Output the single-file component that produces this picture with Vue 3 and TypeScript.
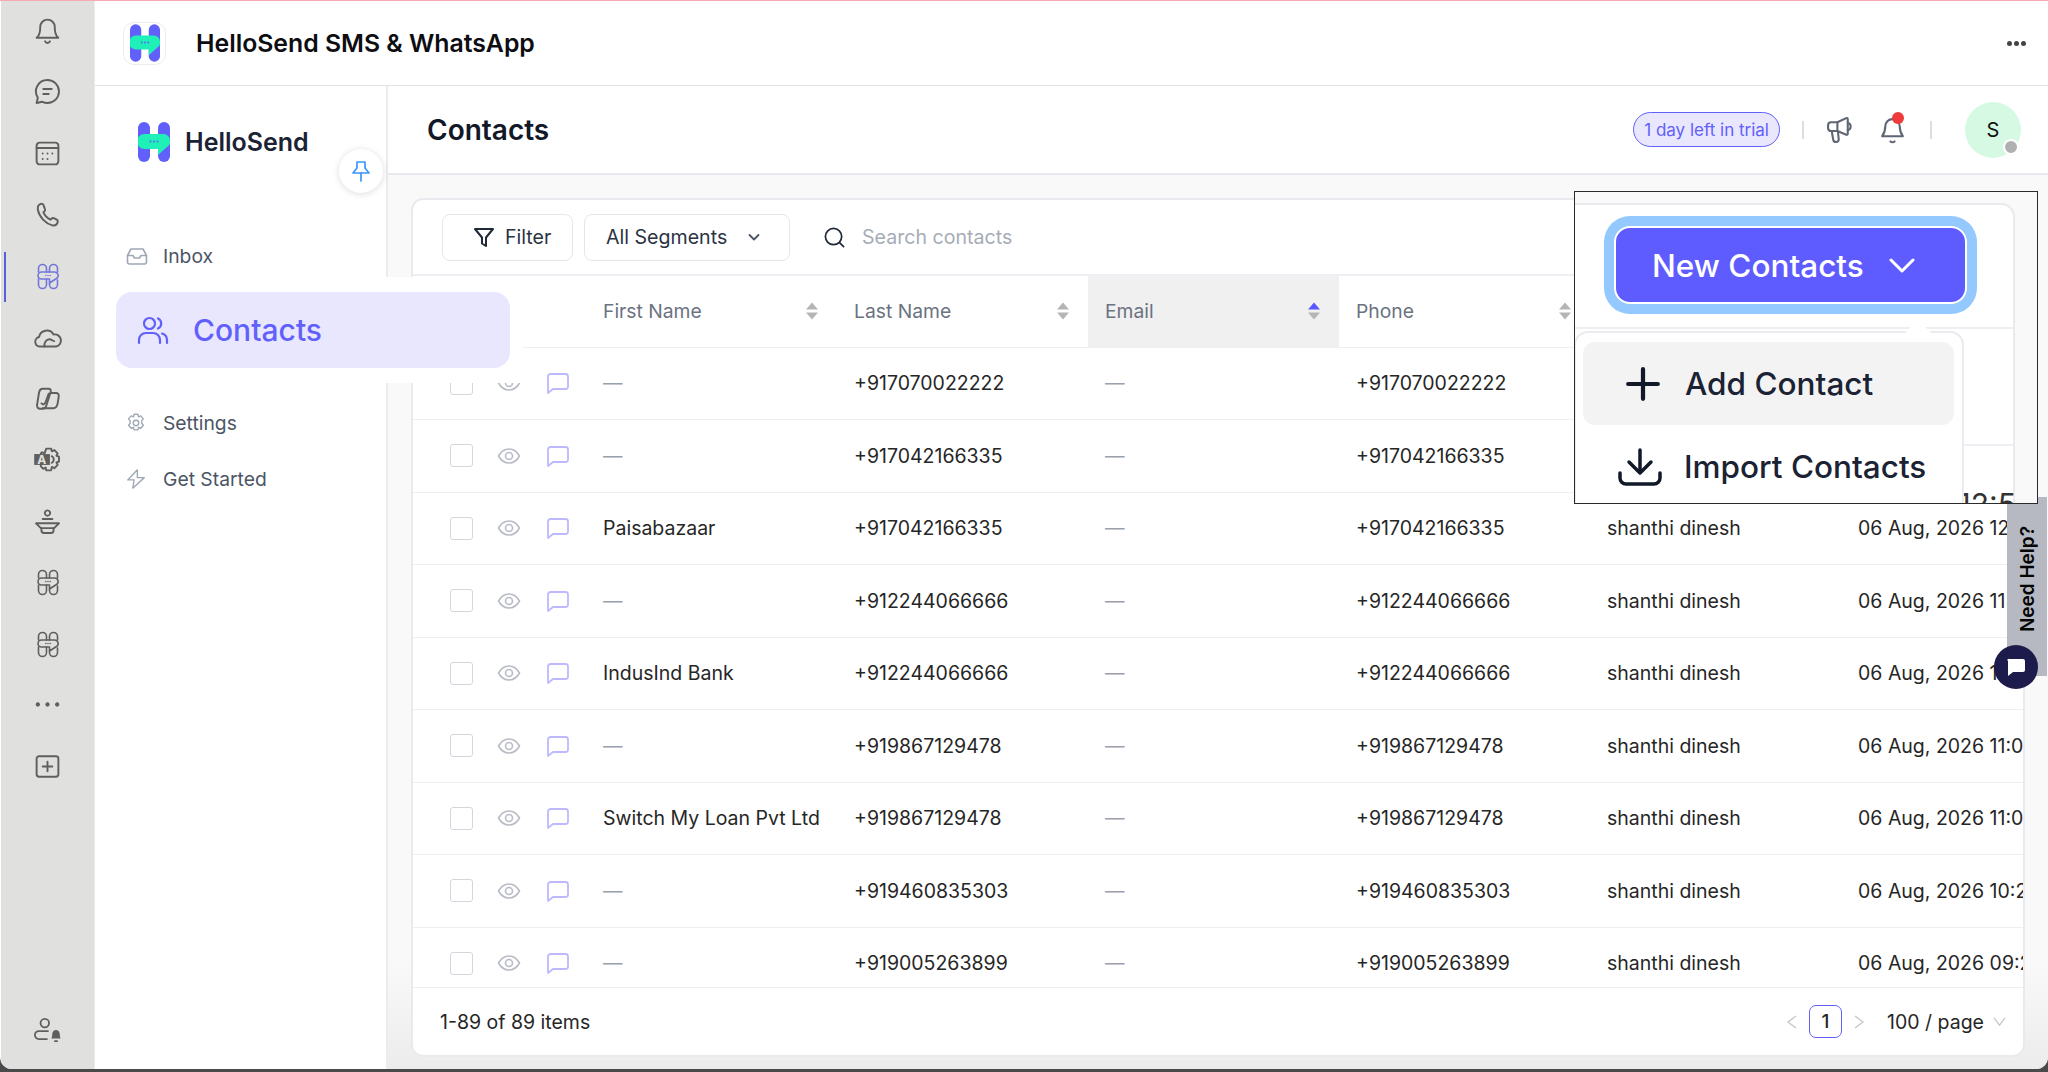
<script setup lang="ts">
type RailIcon = { name: string; vb?: string; w?: number; paths: string[]; fills?: string[]; label?: string; active?: boolean };

const logoOutline = [
  'M2.5 10V6.5a4 4 0 0 1 8 0V10',
  'M13.5 10V6.5a4 4 0 0 1 8 0V10',
  'M5.5 10h13a3.6 3.6 0 0 1 2.4 6.3L13.5 21v-4h-8a3.5 3.5 0 0 1 0-7z',
  'M2.5 17v5.5a4 4 0 0 0 8 0V17',
  'M21.5 18v4.5a4 4 0 0 1-8 0V21',
  'M9.8 13.5h.01M12 13.5h.01M14.2 13.5h.01',
];

const railIcons: RailIcon[] = [
  { name: 'bell', paths: ['M6 9a6 6 0 0 1 12 0c0 5 1 7.500 3 9H3c2-1.500 3-4 3-9z', 'M10 21a2.200 2.200 0 0 0 4 0'] },
  { name: 'chat', paths: ['M12 2.500a9.500 9.500 0 0 1 0 19c-1.500 0-3-.4-4.300-1l-4.700 1 1-4.300A9.500 9.500 0 0 1 12 2.500z', 'M8.500 10h7', 'M8.500 14h4.500'] },
  { name: 'calendar', paths: ['M5.500 3h13A2.500 2.500 0 0 1 21 5.500v13a2.500 2.500 0 0 1-2.500 2.500h-13A2.500 2.500 0 0 1 3 18.500v-13A2.500 2.500 0 0 1 5.500 3z', 'M3 7.500h18', 'M8 12h.01M12 12h.01M16 12h.01M8 16.500h.01M12 16.500h.01'] },
  { name: 'phone', paths: ['M7 3c-2 .5-3.500 2-3 5 1 6 6.500 11.500 12 13 2.500.5 4-1 4.500-3 .2-.8-.2-1.300-.9-1.700l-2.400-1.300c-.7-.3-1.200-.2-1.700.3l-.9 1c-2.600-1-5-3.600-6-6.200l1-.9c.5-.5.6-1 .3-1.700L8.600 4C8.200 3.300 7.700 2.900 7 3z'] },
  { name: 'logo', vb: '0 0 24 28', w: 24, paths: logoOutline, active: true },
  { name: 'cloud', paths: ['M6 19.500a4 4 0 0 1-1-7.900A6.500 6.500 0 0 1 17 9.500a5 5 0 0 1 2 10z', 'M9.500 19.500c-.5-3 1.500-6 4-6 2 0 3 1.500 4 1.500'] },
  { name: 'copilot', paths: ['M8 4h5c1.500 0 2 1 1.600 2.500L11 18c-.4 1.500-1.500 2.500-3 2.500H6c-2 0-3-1.500-2.600-3.500L5 7c.4-2 1.500-3 3-3z', 'M14.500 7.500H19c1.800 0 2.600 1.300 2.300 3l-1 6c-.4 2.400-1.800 3.500-3.500 3.500H8', 'M13 8c-1 3-3 8-3.500 8.500S8 17 7 16'] },
  {
    name: 'translate',
    paths: ['M6.500 7l1-1 2 1L11 3h4l.6 2.200 2.100-1 2.700 2.700-1 2 2.100.7v4.200l-2.100.7 1 2-2.700 2.700-2.100-1L15 21h-4l-.5-2.300-2 1-2-2V16', 'M15.500 9.300a3 3 0 0 1 0 5.400'],
    fills: ['M1 7.500h13v9H1z'],
    label: 'A',
  },
  { name: 'seat', paths: ['M12 2.800a2.200 2.200 0 1 0 .01 0z', 'M8 10h8', 'M2.500 13.500h19l-4 4h-11z', 'M7 17.500v2a2 2 0 0 0 2 2h6a2 2 0 0 0 2-2v-2'] },
  { name: 'logo2', vb: '0 0 24 28', w: 24, paths: logoOutline },
  { name: 'logo3', vb: '0 0 24 28', w: 24, paths: logoOutline },
  { name: 'more', paths: [], fills: ['M4 10.200a1.800 1.800 0 1 0 .01 0z', 'M12 10.200a1.800 1.800 0 1 0 .01 0z', 'M20 10.200a1.800 1.800 0 1 0 .01 0z'] },
  { name: 'plus', paths: ['M5 3.500h14A2 2 0 0 1 21 5.500v13a2 2 0 0 1-2 2H5a2 2 0 0 1-2-2v-13a2 2 0 0 1 2-2z', 'M12 8v8M8 12h8'] },
];

type Row = { first: string; phone: string; time: string };

const rows: Row[] = [
  { first: '—', phone: '+917070022222', time: '01:14 PM' },
  { first: '—', phone: '+917042166335', time: '12:58 PM' },
  { first: 'Paisabazaar', phone: '+917042166335', time: '12:58 PM' },
  { first: '—', phone: '+912244066666', time: '11:32 AM' },
  { first: 'IndusInd Bank', phone: '+912244066666', time: '11:32 AM' },
  { first: '—', phone: '+919867129478', time: '11:07 AM' },
  { first: 'Switch My Loan Pvt Ltd', phone: '+919867129478', time: '11:07 AM' },
  { first: '—', phone: '+919460835303', time: '10:24 AM' },
  { first: '—', phone: '+919005263899', time: '09:26 AM' },
];

const columns = ['First Name', 'Last Name', 'Email', 'Phone', 'Owner', 'Created At'];
</script>

<template>
  <div class="window">
    <aside class="rail">
      <span class="rail-marker"></span>
      <div v-for="icon in railIcons" :key="icon.name" class="rail-item" :class="{ active: icon.active }">
        <svg :viewBox="icon.vb ?? '0 0 24 24'" :width="icon.w ?? 29" :height="icon.vb ? 28 : 29" fill="none" stroke="currentColor" stroke-width="1.600" stroke-linecap="round" stroke-linejoin="round">
          <path v-for="d in icon.fills ?? []" :key="d" :d="d" fill="currentColor" stroke="none" />
          <path v-for="d in icon.paths" :key="d" :d="d" />
          <text v-if="icon.label" x="3.500" y="15.500" font-size="10" font-weight="700" fill="#e0e0de" stroke="none">{{ icon.label }}</text>
        </svg>
      </div>
      <div class="rail-item rail-bottom">
        <svg viewBox="0 0 30 24" width="32" height="26" fill="none" stroke="currentColor" stroke-width="1.700" stroke-linecap="round">
          <circle cx="12" cy="5.500" r="4" />
          <path d="M15 13H6.500a3.200 3.200 0 0 0 0 7.500H14" />
          <path d="M18 20c1-1 .8-3 1-4.500.3-2 1.500-3.500 3.500-3.500s3.200 1.500 3.500 3.500c.2 1.500 0 3.500 1 4.500z" fill="currentColor" stroke="none" />
          <path d="M21.500 22.500h2" />
        </svg>
      </div>
    </aside>

    <div class="shell">
      <header class="app-bar">
        <div class="app-icon">
          <svg viewBox="0 0 32 40" width="30" height="38">
            <rect width="12" height="40" rx="6" fill="#6160fb" />
            <rect x="20" width="12" height="40" rx="6" fill="#6160fb" />
            <path d="M6.500 12h19a6.500 6.500 0 0 1 6.500 6.500v1.500c0 2-1 3.500-2.500 4.500L20 33v-6H6.500a7.500 7.500 0 0 1 0-15z" fill="#1ef0b8" />
            <circle cx="12.500" cy="19.500" r="1" fill="#6160fb" />
            <circle cx="16" cy="19.500" r="1" fill="#6160fb" />
            <circle cx="19.500" cy="19.500" r="1" fill="#6160fb" />
          </svg>
        </div>
        <h1 class="app-title">HelloSend SMS &amp; WhatsApp</h1>
        <div class="app-dots"><i></i><i></i><i></i></div>
      </header>

      <div class="workspace">
        <nav class="nav">
          <div class="brand">
            <svg viewBox="0 0 32 40" width="32" height="40">
              <rect width="12" height="40" rx="6" fill="#6160fb" />
              <rect x="20" width="12" height="40" rx="6" fill="#6160fb" />
              <path d="M6.500 12h19a6.500 6.500 0 0 1 6.500 6.500v1.500c0 2-1 3.500-2.500 4.500L20 33v-6H6.500a7.500 7.500 0 0 1 0-15z" fill="#1ef0b8" />
              <circle cx="12.500" cy="19.500" r="1" fill="#6160fb" />
              <circle cx="16" cy="19.500" r="1" fill="#6160fb" />
              <circle cx="19.500" cy="19.500" r="1" fill="#6160fb" />
            </svg>
            <span>HelloSend</span>
          </div>
          <button class="pin" type="button" aria-label="Pin">
            <svg viewBox="0 0 24 24" width="24" height="24" fill="none" stroke="#3a97fb" stroke-width="1.700" stroke-linejoin="round" stroke-linecap="round">
              <path d="M8 3h8v6l4 5H4l4-5z" />
              <path d="M12 14v8" />
            </svg>
          </button>

          <a class="nav-link inbox">
            <svg viewBox="0 0 24 24" width="24" height="24" fill="none" stroke="#a0a8b4" stroke-width="1.600" stroke-linejoin="round">
              <path d="M6 5h12l3.500 6.500V18a2 2 0 0 1-2 2h-15a2 2 0 0 1-2-2v-6.500z" />
              <path d="M2.500 11.500H8l1.500 2.500h5l1.500-2.500h5.500" />
            </svg>
            Inbox
          </a>
          <div class="nav-active-wrap">
            <a class="nav-active">
              <svg viewBox="0 0 32 32" width="32" height="32" fill="none" stroke="#6160fb" stroke-width="2.200" stroke-linecap="round">
                <circle cx="12.500" cy="9.500" r="5.500" />
                <path d="M2 29v-3c0-4 3-7 7-7h7c4 0 7 3 7 7v3" />
                <path d="M21 4.500a5.500 5.500 0 0 1 0 10" />
                <path d="M25 19.500c3 .8 5 3.500 5 6.500v3" />
              </svg>
              Contacts
            </a>
          </div>
          <a class="nav-link settings">
            <svg viewBox="0 0 24 24" width="22" height="22" fill="none" stroke="#a0a8b4" stroke-width="1.500" stroke-linejoin="round">
              <path d="M10 2.500h4l.7 2.700 2.500-1 2.800 3.300-1.800 2.200.1 2.600 1.700 2.200-2.800 3.300-2.500-1-.7 2.700h-4l-.7-2.700-2.500 1L4 14.500l1.700-2.200-.1-2.600L3.800 7.500 6.800 4.200l2.500 1z" />
              <circle cx="12" cy="12" r="3" />
            </svg>
            Settings
          </a>
          <a class="nav-link started">
            <svg viewBox="0 0 24 24" width="22" height="22" fill="none" stroke="#a0a8b4" stroke-width="1.500" stroke-linejoin="round">
              <path d="M13.500 2 3 13h7l-1.500 9L21 10.500h-7.500z" />
            </svg>
            Get Started
          </a>
        </nav>

        <main class="main">
          <div class="page-head">
            <h2>Contacts</h2>
            <div class="head-tools">
              <span class="trial">1 day left in trial</span>
              <span class="sep"></span>
              <svg class="mega" viewBox="0 0 28 28" width="29" height="29" fill="none" stroke="#5f6673" stroke-width="2" stroke-linejoin="round" stroke-linecap="round">
                <path d="M2 10c0-1.700 1-3 3-3h6l8.500-4c.9-.4 1.500.1 1.500 1v14c0 .9-.6 1.400-1.500 1L11 15.500H5c-2 0-3-1.300-3-3z" />
                <path d="M11 7v8.500" />
                <path d="M5.500 15.500 7 24a2.700 2.700 0 0 0 5.300-.5L11.500 16" />
                <path d="M21 7.500a3.700 3.700 0 0 1 0 7.200" />
              </svg>
              <span class="bell-wrap">
                <svg viewBox="0 0 24 28" width="25" height="29" fill="none" stroke="#5f6673" stroke-width="2" stroke-linejoin="round" stroke-linecap="round">
                  <path d="M5 11a7 7 0 0 1 14 0c0 5 1.500 7.500 3 9.500H2c1.500-2 3-4.500 3-9.500z" />
                  <path d="M10 25.500c1 1 3 1 4 0" />
                </svg>
                <i class="red-dot"></i>
              </span>
              <span class="sep sep-2"></span>
              <span class="avatar">S<i class="status"></i></span>
            </div>
          </div>

          <div class="body">
            <section class="card">
              <div class="toolbar">
                <button class="btn filter" type="button">
                  <svg viewBox="0 0 24 24" width="24" height="24" fill="none" stroke="#1f2937" stroke-width="2" stroke-linejoin="round">
                    <path d="M3 4h18l-7 8.500V21l-4-2.500v-6z" />
                  </svg>
                  Filter
                </button>
                <button class="btn segments" type="button">
                  All Segments
                  <svg viewBox="0 0 14 14" width="14" height="14" fill="none" stroke="#4b5563" stroke-width="1.800" stroke-linecap="round" stroke-linejoin="round">
                    <path d="M2.500 5l4.500 4.500L11.500 5" />
                  </svg>
                </button>
                <div class="search">
                  <svg viewBox="0 0 24 24" width="23" height="23" fill="none" stroke="#1f2937" stroke-width="1.800" stroke-linecap="round">
                    <circle cx="11" cy="11" r="8.500" />
                    <path d="m17.500 17.500 4 4" />
                  </svg>
                  <span>Search contacts</span>
                </div>
              </div>

              <div class="table">
                <div class="grid-row head">
                  <div class="lead"></div>
                  <div v-for="col in columns" :key="col" class="th" :class="{ sorted: col === 'Email' }">
                    {{ col }}
                    <span class="sorter"><i class="up"></i><i class="down"></i></span>
                  </div>
                </div>
                <div v-for="(row, i) in rows" :key="i" class="grid-row">
                  <div class="lead">
                    <span class="check"></span>
                    <svg viewBox="0 0 24 24" width="24" height="24" fill="none" stroke="#b9bcc4" stroke-width="1.600">
                      <path d="M1.500 12C4 7.500 7.500 5 12 5s8 2.500 10.500 7c-2.500 4.500-6 7-10.500 7s-8-2.500-10.500-7z" />
                      <circle cx="12" cy="12" r="3.500" />
                    </svg>
                    <svg class="note" viewBox="0 0 24 24" width="24" height="24" fill="none" stroke="#bdb9ff" stroke-width="1.800" stroke-linejoin="round">
                      <path d="M4.500 3h15A2.500 2.500 0 0 1 22 5.500v10a2.500 2.500 0 0 1-2.500 2.500H7l-5 4V5.500A2.500 2.500 0 0 1 4.500 3z" />
                    </svg>
                  </div>
                  <div class="td" :class="{ dash: row.first === '—' }">{{ row.first }}</div>
                  <div class="td">{{ row.phone }}</div>
                  <div class="td dash">—</div>
                  <div class="td">{{ row.phone }}</div>
                  <div class="td">shanthi dinesh</div>
                  <div class="td">06 Aug, 2026 {{ row.time }}</div>
                </div>
              </div>

              <footer class="pager">
                <span>1-89 of 89 items</span>
                <div class="pager-right">
                  <svg viewBox="0 0 12 16" width="12" height="16" fill="none" stroke="#c4c6cb" stroke-width="1.300"><path d="M10 2 2 8l8 6" /></svg>
                  <span class="page-no">1</span>
                  <svg viewBox="0 0 12 16" width="12" height="16" fill="none" stroke="#c4c6cb" stroke-width="1.300"><path d="m2 2 8 6-8 6" /></svg>
                  <span class="page-size">100 / page</span>
                  <svg viewBox="0 0 16 12" width="15" height="11" fill="none" stroke="#c4c6cb" stroke-width="1.300"><path d="m2 2 6 8 6-8" /></svg>
                </div>
              </footer>
            </section>
          </div>
        </main>
      </div>
    </div>

    <!-- pasted callout over the table -->
    <div class="callout">
      <div class="callout-card">
        <button class="new-btn" type="button">
          New Contacts
          <svg viewBox="0 0 26 16" width="26" height="16" fill="none" stroke="#fff" stroke-width="3" stroke-linecap="round" stroke-linejoin="round">
            <path d="m2 3 11 11L24 3" />
          </svg>
        </button>
        <div class="callout-line"></div>
        <div class="callout-line second"></div>
      </div>
      <span class="callout-time">12:5</span>
      <div class="dropdown">
        <i class="arrow"></i>
        <div class="menu-item hover">
          <svg class="plus" viewBox="0 0 34 34" width="36" height="36" fill="none" stroke="#111827" stroke-width="4" stroke-linecap="round">
            <path d="M17 3v28M3 17h28" />
          </svg>
          Add Contact
        </div>
        <div class="menu-item import">
          <svg viewBox="0 0 44 38" width="44" height="38" fill="none" stroke="#111827" stroke-width="3.500" stroke-linecap="round" stroke-linejoin="round">
            <path d="M22 2v22" />
            <path d="m11 14 11 11 11-11" />
            <path d="M2 25v5a6 6 0 0 0 6 6h28a6 6 0 0 0 6-6v-5" />
          </svg>
          Import Contacts
        </div>
      </div>
    </div>

    <div class="help-tab"><span>Need Help?</span></div>
    <div class="help-bubble">
      <svg viewBox="0 0 24 24" width="24" height="24"><path d="M5 4h14a2 2 0 0 1 2 2v9a2 2 0 0 1-2 2H9l-5 4V6a1 1 0 0 1 1-2z" fill="#fff" /></svg>
    </div>
  </div>
</template>

<style>
html,
body {
  margin: 0;
  background: #4a4a4a;
}
</style>

<style scoped>
* {
  box-sizing: border-box;
}
.window {
  position: relative;
  display: flex;
  width: 2048px;
  height: 1069px;
  overflow: hidden;
  border-top: 1px solid #f6a9b2;
  border-radius: 0 0 12px 12px;
  background: #fff;
  font-family: Inter, "Liberation Sans", sans-serif;
  color: #262626;
}
.rail {
  position: relative;
  display: flex;
  flex-direction: column;
  flex: none;
  width: 94px;
  margin-left: 1px;
  background: #e0e0de;
  border-right: 1px solid #ececec;
  color: #5f5f5f;
}
.rail-marker {
  position: absolute;
  left: 3px;
  top: 251px;
  width: 2px;
  height: 50px;
  background: #5b60d8;
}
.rail-item {
  display: flex;
  flex: none;
  align-items: center;
  justify-content: center;
  height: 61.300px;
}
.rail-marker + .rail-item {
  margin-top: -1px;
}
.rail-item.active {
  color: #7377dc;
}
.rail-bottom {
  margin-top: auto;
  margin-bottom: 8px;
}
.shell {
  display: flex;
  flex: 1;
  flex-direction: column;
  min-width: 0;
}
.app-bar {
  display: flex;
  flex: none;
  align-items: center;
  height: 85px;
  padding: 0 22px 0 28px;
  border-bottom: 1px solid #e2e3e8;
}
.app-icon {
  display: flex;
  align-items: center;
  justify-content: center;
  width: 43px;
  height: 43px;
  border: 1px solid #ececec;
  border-radius: 11px;
}
.app-title {
  margin: 0 0 0 30px;
  font-size: 24.800px;
  font-weight: 600;
  color: #0d0d12;
}
.app-dots {
  display: flex;
  gap: 2px;
  margin-left: auto;
}
.app-dots i {
  width: 5px;
  height: 5px;
  border-radius: 50%;
  background: #444;
}
.workspace {
  display: flex;
  flex: 1;
  min-height: 0;
}
.nav {
  position: relative;
  z-index: 2;
  flex: none;
  width: 293px;
  border-right: 2px solid #ececf0;
  background: #fff;
}
.brand {
  display: flex;
  align-items: center;
  gap: 15px;
  padding: 36px 0 0 43px;
  font-size: 25px;
  font-weight: 600;
  color: #1a2233;
}
.pin {
  position: absolute;
  left: 244px;
  top: 63px;
  display: flex;
  align-items: center;
  justify-content: center;
  width: 44px;
  height: 44px;
  padding: 0;
  border: none;
  border-radius: 50%;
  background: #fff;
  box-shadow: 0 1px 7px rgba(0, 0, 0, 0.14);
}
.nav-link {
  display: flex;
  align-items: center;
  gap: 16px;
  height: 30px;
  padding-left: 30px;
  font-size: 19.300px;
  color: #4b5565;
}
.inbox {
  margin-top: 79px;
  gap: 14px;
}
.settings {
  margin-top: 25px;
}
.started {
  margin-top: 26px;
}
.nav-active-wrap {
  width: 428px;
  margin-top: 6px;
  padding: 15px 13px 15px 21px;
  background: #fff;
}
.nav-active {
  display: flex;
  align-items: center;
  gap: 24px;
  height: 76px;
  padding-left: 21px;
  border-radius: 16px;
  background: #e9e7fe;
  font-size: 30px;
  font-weight: 500;
  color: #6160fb;
}
.main {
  display: flex;
  flex: 1;
  flex-direction: column;
  min-width: 0;
}
.page-head {
  display: flex;
  flex: none;
  align-items: center;
  height: 89px;
  padding: 0 27px 0 39px;
  border-bottom: 2px solid #e8e9ee;
}
.page-head h2 {
  margin: 0;
  font-size: 28px;
  font-weight: 600;
  color: #111827;
}
.head-tools {
  display: flex;
  align-items: center;
  margin-left: auto;
}
.trial {
  display: flex;
  align-items: center;
  height: 35px;
  padding: 0 10px;
  border: 1.500px solid #6160fb;
  border-radius: 18px;
  background: #e9e7fe;
  font-size: 17px;
  color: #6160fb;
}
.sep {
  width: 2px;
  height: 18px;
  margin: 0 22px;
  background: #dcdde1;
}
.sep-2 {
  margin: 0 33px 0 25px;
}
.bell-wrap {
  position: relative;
  display: flex;
  margin-left: 25px;
}
.red-dot {
  position: absolute;
  right: 1px;
  top: -3px;
  width: 12px;
  height: 12px;
  border-radius: 50%;
  background: #ef3b3b;
}
.avatar {
  position: relative;
  display: flex;
  align-items: center;
  justify-content: center;
  width: 56px;
  height: 56px;
  border-radius: 50%;
  background: #d5f9e3;
  font-size: 20px;
  color: #111;
}
.status {
  position: absolute;
  right: 2px;
  bottom: 3px;
  width: 16px;
  height: 16px;
  border: 2px solid #fff;
  border-radius: 50%;
  background: #b0b0b0;
}
.body {
  flex: 1;
  min-height: 0;
  padding: 23px 23px 12px 23px;
  background: linear-gradient(#f9f9fa 88%, #ececec);
}
.card {
  display: flex;
  flex-direction: column;
  height: 100%;
  overflow: hidden;
  border: 2px solid #e9eaee;
  border-radius: 12px;
  background: #fff;
}
.toolbar {
  display: flex;
  flex: none;
  align-items: center;
  height: 76px;
  padding-left: 29px;
  border-bottom: 2px solid #eeeff2;
}
.btn {
  display: flex;
  align-items: center;
  height: 47px;
  border: 1.500px solid #e5e6ea;
  border-radius: 8px;
  background: #fff;
  font-family: inherit;
  font-size: 19.600px;
  color: #2a3342;
}
.filter {
  gap: 9px;
  width: 131px;
  padding-left: 29px;
}
.segments {
  justify-content: space-between;
  width: 206px;
  margin-left: 11px;
  padding: 0 28px 0 21px;
}
.search {
  display: flex;
  align-items: center;
  gap: 16px;
  margin-left: 33px;
  font-size: 19.600px;
  color: #a6acb7;
}
.table {
  flex: 1;
  min-height: 0;
  overflow: hidden;
}
.grid-row {
  display: grid;
  grid-template-columns: 173px repeat(6, 251px);
  align-items: stretch;
  height: 72.500px;
  border-bottom: 1.500px solid #eeeff2;
}
.grid-row.head {
  height: 71.500px;
}
.lead {
  display: flex;
  align-items: center;
  padding-left: 37px;
}
.check {
  flex: none;
  width: 23px;
  height: 23px;
  border: 1.500px solid #d3d6dd;
  border-radius: 3px;
}
.lead svg {
  flex: none;
  margin-left: 24px;
}
.lead .note {
  margin-left: 25px;
}
.th {
  position: relative;
  display: flex;
  align-items: center;
  padding-left: 17px;
  font-size: 19.300px;
  color: #6b7280;
}
.th.sorted {
  background: #f0f0f0;
}
.sorter {
  position: absolute;
  right: 19px;
  top: 50%;
  display: flex;
  flex-direction: column;
  gap: 3px;
  transform: translateY(-50%);
}
.sorter i {
  width: 0;
  height: 0;
  border-left: 6px solid transparent;
  border-right: 6px solid transparent;
}
.sorter .up {
  border-bottom: 7px solid #b5b5b5;
}
.sorter .down {
  border-top: 7px solid #b5b5b5;
}
.sorted .sorter .up {
  border-bottom-color: #5b57ff;
}
.td {
  display: flex;
  align-items: center;
  padding-left: 17px;
  font-size: 19.500px;
  white-space: nowrap;
  color: #262626;
}
.td.dash {
  color: #9aa1ae;
}
.pager {
  display: flex;
  flex: none;
  align-items: center;
  justify-content: space-between;
  height: 68px;
  padding: 0 16px 0 27px;
  border-top: 1.500px solid #eeeff2;
  font-size: 19.500px;
}
.pager-right {
  display: flex;
  align-items: center;
}
.page-no {
  display: flex;
  align-items: center;
  justify-content: center;
  width: 33px;
  height: 33px;
  margin: 0 11px;
  border: 1.500px solid #6160fb;
  border-radius: 7px;
  font-size: 19px;
  font-weight: 500;
}
.page-size {
  margin: 0 8px 0 22px;
}
.callout {
  position: absolute;
  left: 1574px;
  top: 190px;
  z-index: 5;
  width: 464px;
  height: 313px;
  overflow: hidden;
  border: 1.500px solid #2b2b2b;
  background: #f9f9fa;
}
.callout-card {
  position: relative;
  height: 320px;
  margin: 11px 22px 0 -12px;
  padding: 21px 0 0 49px;
  border: 2px solid #e9eaee;
  border-radius: 0 14px 0 0;
  background: #fff;
}
.new-btn {
  display: flex;
  align-items: center;
  gap: 25px;
  width: 353px;
  height: 78px;
  padding: 0 0 0 36px;
  border: 2px solid #fff;
  border-radius: 16px;
  background: #5f5cff;
  box-shadow: 0 0 0 10px #93c9ff;
  font-family: inherit;
  font-size: 31.500px;
  font-weight: 500;
  color: #fff;
}
.callout-line {
  position: absolute;
  left: 0;
  right: 0;
  top: 122px;
  height: 2px;
  background: #eeeff2;
}
.callout-line.second {
  top: 239px;
}
.callout-time {
  position: absolute;
  right: 21px;
  top: 294px;
  font-size: 30px;
  line-height: 1.200;
  color: #333;
}
.dropdown {
  position: absolute;
  left: -1px;
  top: 139px;
  width: 390px;
  height: 190px;
  padding: 9px 8px 0 7px;
  border: 2px solid #eaebf0;
  border-radius: 14px;
  background: #fff;
}
.arrow {
  position: absolute;
  right: 34px;
  top: -9px;
  width: 20px;
  height: 20px;
  background: #fff;
  transform: rotate(45deg);
}
.menu-item {
  position: relative;
  display: flex;
  align-items: center;
  height: 83px;
  padding-left: 42px;
  gap: 24px;
  border-radius: 12px;
  font-size: 31.500px;
  font-weight: 500;
  color: #1a2233;
}
.menu-item.hover {
  background: #f3f3f4;
}
.menu-item.import {
  padding-left: 35px;
  gap: 22px;
}
.help-tab {
  position: absolute;
  left: 2007px;
  top: 496px;
  z-index: 4;
  display: flex;
  align-items: flex-start;
  justify-content: center;
  width: 40px;
  height: 179px;
  padding-top: 29px;
  border-radius: 0 0 0 12px;
  background: #b6b9c1;
}
.help-tab span {
  writing-mode: vertical-rl;
  transform: rotate(180deg);
  font-size: 19px;
  font-weight: 600;
  color: #050505;
}
.help-bubble {
  position: absolute;
  left: 1994px;
  top: 644px;
  z-index: 6;
  display: flex;
  align-items: center;
  justify-content: center;
  width: 44px;
  height: 44px;
  border-radius: 50%;
  background: #1d1b4b;
}
</style>
